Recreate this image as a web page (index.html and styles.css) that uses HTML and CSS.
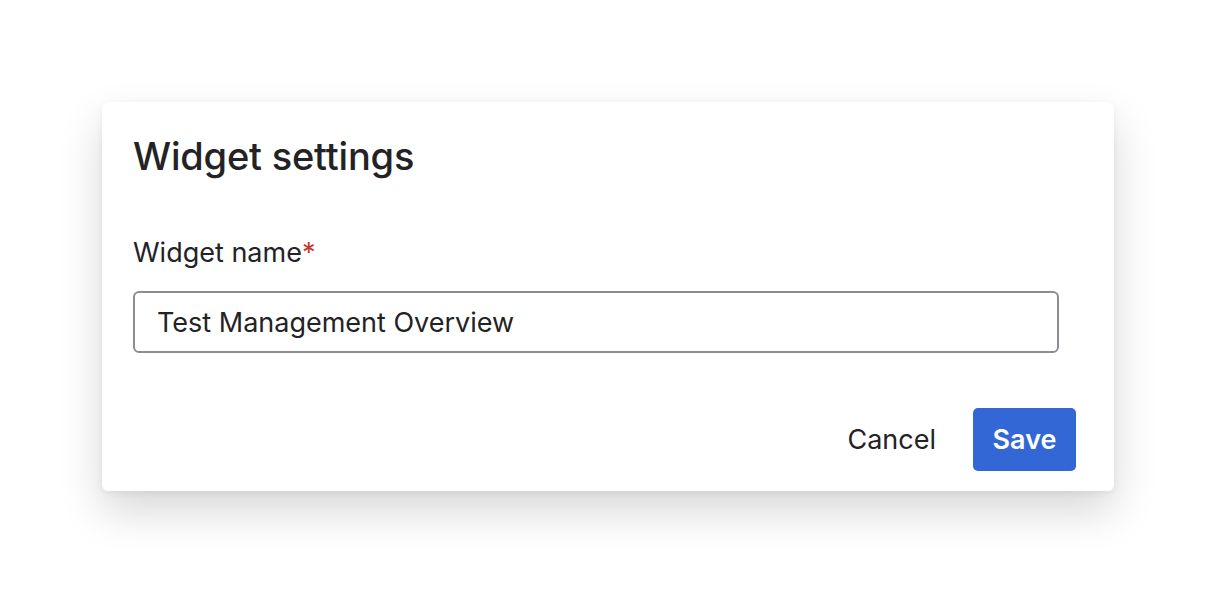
FILE: index.html
```html
<!DOCTYPE html>
<html>
<head>
<meta charset="utf-8">
<link rel="stylesheet" href="styles.css">
</head>
<body>
<div class="page">
  <div class="modal">
    <h1 class="title">Widget settings</h1>
    <div class="field">
      <label class="label">Widget name<span class="req">*</span></label>
      <div class="input">Test Management Overview</div>
    </div>
    <div class="actions">
      <button class="btn btn-cancel">Cancel</button>
      <button class="btn btn-save">Save</button>
    </div>
  </div>
</div>
</body>
</html>
```
FILE: styles.css
```css
html, body {
  margin: 0;
  padding: 0;
  background: #ffffff;
}
.page {
  height: 594px;
  box-sizing: border-box;
  padding: 102px 0 0 102px;
  font-family: Inter, "Noto Sans", sans-serif;
  color: #232326;
}
.modal {
  width: 1012px;
  box-sizing: border-box;
  background: #fff;
  border-radius: 6px;
  box-shadow: 0 20px 44px rgba(0, 0, 0, 0.16), 0 2px 6px rgba(0,0,0,0.06);
  padding: 30px 38px 20px 31px;
}
.title {
  margin: 0;
  font-size: 38px;
  font-weight: 500;
  line-height: 48px;
  letter-spacing: -0.2px;
}
.field {
  margin-top: 56px;
  display: flex;
  flex-direction: column;
}
.label {
  font-size: 27px;
  line-height: 34px;
}
.req {
  color: #c5372c;
}
.input {
  margin-top: 21px;
  width: 926px;
  height: 62px;
  box-sizing: border-box;
  border: 2px solid #8b8d92;
  border-radius: 6px;
  padding: 0 22px;
  display: flex;
  align-items: center;
  font-size: 27px;
}
.actions {
  margin-top: 55px;
  display: flex;
  justify-content: flex-end;
  align-items: center;
  gap: 17px;
}
.btn {
  font-family: Inter, "Noto Sans", sans-serif;
  font-size: 27px;
  height: 63px;
  border: none;
  border-radius: 5px;
  background: transparent;
  color: #232326;
  padding: 0 20px;
  cursor: pointer;
}
.btn-save {
  background: #3367d6;
  color: #fff;
  font-weight: 600;
  width: 103px;
  padding: 0;
}
```
